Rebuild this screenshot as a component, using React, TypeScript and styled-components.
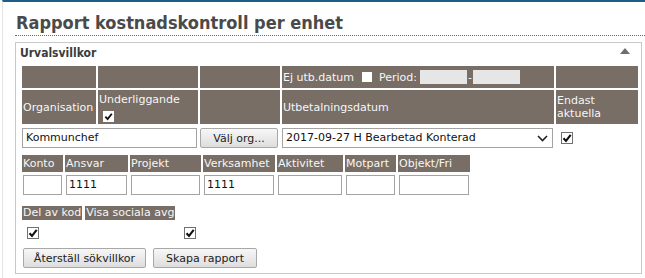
import React from 'react';
import styled, { createGlobalStyle } from 'styled-components';

const GlobalStyle = createGlobalStyle`
  body {
    margin: 0;
    background: #fff;
    font-family: "DejaVu Sans", Verdana, sans-serif;
    font-size: 11px;
    color: #222;
  }
`;

const Page = styled.div`
  min-height: 276px;
  margin-left: 2px;
  padding-left: 12px;
  border-top: 2px solid #1e5d86;
  border-left: 1px solid #e4e4e4;
`;

const Title = styled.h1`
  margin: 0;
  padding: 9px 0 0 1px;
  font-family: "Liberation Sans Narrow", "DejaVu Sans Condensed", sans-serif;
  font-size: 18px;
  line-height: 24px;
  font-weight: bold;
  color: #4a4a4a;
  border-bottom: 1px dotted #2e7f97;
`;

const Panel = styled.section`
  margin-top: 6px;
  width: 627px;
  box-sizing: border-box;
  border: 1px solid #c8c8c8;
  padding-bottom: 5px;
`;

const PanelHeader = styled.header`
  display: flex;
  justify-content: space-between;
  padding: 3px 11px 0 4px;
  font-family: "Liberation Sans Narrow", "DejaVu Sans Condensed", sans-serif;
  font-size: 12px;
  line-height: 14px;
  font-weight: bold;
  color: #3c3c3c;

  svg {
    margin-top: 2px;
  }
`;

const Content = styled.div`
  padding: 6px 0 0 6px;
`;

const HeadGrid = styled.div`
  display: grid;
  grid-template-columns: 74px 100px 80px 272px 82px;
  grid-template-rows: 22px 34px;
  gap: 2px;
`;

const Cell = styled.div<{ $column?: boolean }>`
  display: flex;
  flex-direction: ${p => (p.$column ? 'column' : 'row')};
  justify-content: ${p => (p.$column ? 'center' : 'flex-start')};
  align-items: ${p => (p.$column ? 'flex-start' : 'center')};
  padding: 0 1px;
  background: #786e66;
  color: #f6f6f6;
  line-height: 13px;
  white-space: nowrap;
`;

const PeriodInput = styled.span`
  display: inline-block;
  width: 47px;
  height: 14px;
  background: #e6e6e6;
`;

const Gap = styled.span<{ $w: number }>`
  display: inline-block;
  width: ${p => p.$w}px;
`;

const Dash = styled.span`
  width: 6px;
  text-align: center;
`;

const InputRow = styled.div`
  display: grid;
  grid-template-columns: 176px 80px 272px 82px;
  gap: 2px;
  margin-top: 4px;
  height: 20px;
  align-items: center;
`;

const TextBox = styled.div<{ $w?: string }>`
  box-sizing: border-box;
  width: ${p => p.$w ?? '100%'};
  height: 20px;
  padding: 0 3px;
  border: 1px solid #a3a3a3;
  background: #fff;
  line-height: 18px;
  color: #111;
  white-space: nowrap;
  overflow: hidden;
`;

const SelectBox = styled(TextBox)`
  display: flex;
  justify-content: space-between;
  align-items: center;
  padding: 0 4px 0 3px;
`;

const Button = styled.button<{ $w: number }>`
  box-sizing: border-box;
  width: ${p => p.$w}px;
  height: 20px;
  padding: 0;
  border: 1px solid #a8a8a8;
  border-radius: 2px;
  background: linear-gradient(#f7f7f7, #dddddd);
  font-family: "DejaVu Sans", Verdana, sans-serif;
  font-size: 11px;
  color: #222;
`;

const CodeGrid = styled.div`
  display: grid;
  grid-template-columns: 41px 63px 71px 72px 66px 51px 72px;
  grid-template-rows: 17px 20px;
  column-gap: 2px;
  row-gap: 3px;
  width: max-content;
  margin-top: 7px;
`;

const Label = styled.div`
  padding: 0 1px;
  background: #786e66;
  color: #f6f6f6;
  line-height: 17px;
  white-space: nowrap;
  overflow: hidden;
`;

const CodeInput = styled(TextBox)`
  width: calc(100% - 2px);
  margin-left: 1px;
  padding: 0 2px;
`;

const OptionRow = styled.div`
  display: flex;
  gap: 3px;
  margin-top: 11px;
`;

const OptionLabel = styled(Label)`
  line-height: 14px;
`;

const CheckRow = styled.div`
  display: flex;
  gap: 145px;
  margin-top: 7px;
  padding-left: 5px;
`;

const ButtonRow = styled.div`
  display: flex;
  gap: 7px;
  margin: 9px 0 0 1px;
`;

const CheckHolder = styled.span<{ $left: number; $top?: number }>`
  display: flex;
  margin: ${p => p.$top ?? 0}px 0 0 ${p => p.$left}px;
`;

const Box = styled.span<{ $size: number; $bare?: boolean }>`
  display: inline-flex;
  align-items: center;
  justify-content: center;
  flex: none;
  box-sizing: border-box;
  width: ${p => p.$size}px;
  height: ${p => p.$size}px;
  background: #fff;
  border: ${p => (p.$bare ? 'none' : '1px solid #707070')};
`;

function Check({ checked, bare, size = 12 }: { checked?: boolean; bare?: boolean; size?: number }) {
  return (
    <Box $size={size} $bare={bare}>
      {checked && (
        <svg width={size - 2} height={size - 2} viewBox="0 0 10 10">
          <path d="M1.5 5.2 L4 7.9 L8.7 1.9" stroke="#111" strokeWidth="2.1" fill="none" />
        </svg>
      )}
    </Box>
  );
}

const codes = [
  { label: 'Konto', value: '' },
  { label: 'Ansvar', value: '1111' },
  { label: 'Projekt', value: '' },
  { label: 'Verksamhet', value: '1111' },
  { label: 'Aktivitet', value: '' },
  { label: 'Motpart', value: '' },
  { label: 'Objekt/Fri', value: '' },
];

export default function App() {
  return (
    <>
      <GlobalStyle />
      <Page>
        <Title>Rapport kostnadskontroll per enhet</Title>
        <Panel>
          <PanelHeader>
            <span>Urvalsvillkor</span>
            <svg width="10" height="6" viewBox="0 0 10 6">
              <polygon points="0,6 5,0 10,6" fill="#6e6e6e" />
            </svg>
          </PanelHeader>
          <Content>
            <HeadGrid>
              <Cell />
              <Cell />
              <Cell />
              <Cell>
                <span>Ej utb.datum</span>
                <Gap $w={8} />
                <Check bare size={10} />
                <Gap $w={7} />
                <span>Period:</span>
                <Gap $w={3} />
                <PeriodInput />
                <Dash>-</Dash>
                <PeriodInput />
              </Cell>
              <Cell />
              <Cell>Organisation</Cell>
              <Cell $column>
                <span>Underliggande</span>
                <CheckHolder $left={4} $top={5}>
                  <Check bare checked size={11} />
                </CheckHolder>
              </Cell>
              <Cell />
              <Cell>Utbetalningsdatum</Cell>
              <Cell $column>
                <span>Endast</span>
                <span>aktuella</span>
              </Cell>
            </HeadGrid>

            <InputRow>
              <TextBox $w="175px">Kommunchef</TextBox>
              <Button $w={78}>Välj org...</Button>
              <SelectBox $w="271px">
                <span>2017-09-27 H Bearbetad Konterad</span>
                <svg width="11" height="7" viewBox="0 0 11 7">
                  <path d="M1 1 L5.5 5.5 L10 1" stroke="#222" strokeWidth="1.6" fill="none" />
                </svg>
              </SelectBox>
              <CheckHolder $left={5}>
                <Check checked />
              </CheckHolder>
            </InputRow>

            <CodeGrid>
              {codes.map(c => (
                <Label key={c.label}>{c.label}</Label>
              ))}
              {codes.map(c => (
                <CodeInput key={c.label}>{c.value}</CodeInput>
              ))}
            </CodeGrid>

            <OptionRow>
              <OptionLabel>Del av kod</OptionLabel>
              <OptionLabel>Visa sociala avg</OptionLabel>
            </OptionRow>
            <CheckRow>
              <Check checked />
              <Check checked />
            </CheckRow>

            <ButtonRow>
              <Button $w={123}>Återställ sökvillkor</Button>
              <Button $w={104}>Skapa rapport</Button>
            </ButtonRow>
          </Content>
        </Panel>
      </Page>
    </>
  );
}
